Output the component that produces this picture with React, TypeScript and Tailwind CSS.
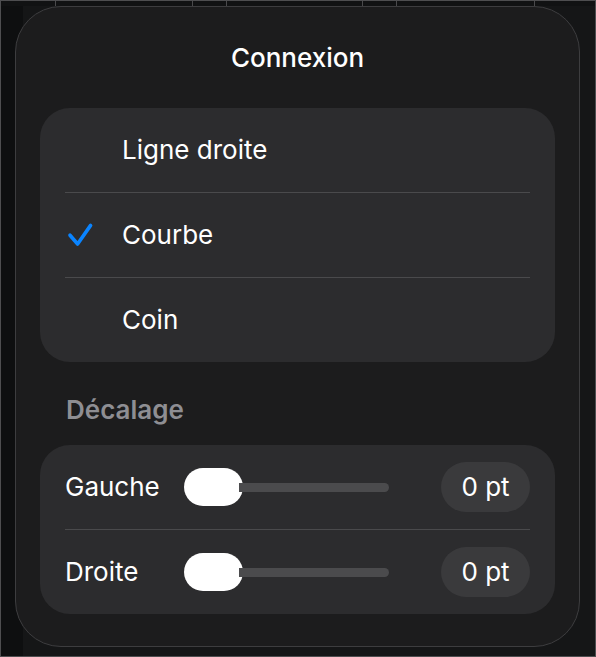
import React from "react";

function Check() {
  return (
    <svg width="30" height="30" viewBox="0 0 30 30" fill="none">
      <path
        d="M5 15.2 L12.6 24 L25.6 5.4"
        stroke="#0a84ff"
        strokeWidth="3.6"
        strokeLinecap="round"
        strokeLinejoin="round"
      />
    </svg>
  );
}

function OptionRow({ label, checked }: { label: string; checked?: boolean }) {
  return (
    <div className="flex h-[84px] items-center px-[25px]">
      <div className="flex w-[57px] items-center">{checked ? <Check /> : null}</div>
      <span className="text-[26px] leading-[30px] text-white">{label}</span>
    </div>
  );
}

function SliderRow({ label }: { label: string }) {
  return (
    <div className="flex h-[84px] items-center px-[25px]">
      <span className="w-[119px] text-[26px] leading-[30px] text-white">{label}</span>
      <div className="flex w-[205px] items-center">
        <div className="h-[38px] w-[59px] shrink-0 rounded-[19px] bg-white" />
        <div className="-ml-[4px] h-[9px] flex-1 rounded-r-full bg-[#4b4b4d]" />
      </div>
      <div className="ml-auto flex h-[50px] w-[89px] items-center justify-center rounded-full bg-[#3a3a3c] text-[26px] leading-[30px] text-white">
        0 pt
      </div>
    </div>
  );
}

function Sep() {
  return <div className="mx-[25px] h-px bg-[#4a4a4c]" />;
}

export default function App() {
  return (
    <div
      className="flex h-[657px] w-[596px] flex-col overflow-hidden border border-[#4e4e50] bg-[#121314]"
      style={{ fontFamily: "Inter, 'Noto Sans', sans-serif" }}
    >
      <div className="flex h-[5px] shrink-0 bg-[#111213]">
        <div className="w-[54px]" />
        <div className="w-[137px] border-l border-[#4a4a4c]" />
        <div className="w-[34px] border-l border-[#4a4a4c]" />
        <div className="w-[136px] border-l border-[#4a4a4c]" />
        <div className="w-[34px] border-l border-[#4a4a4c]" />
        <div className="w-[138px] border-l border-[#4a4a4c]" />
        <div className="flex-1 border-l border-[#4a4a4c]" />
      </div>
      <div className="flex flex-1 bg-[linear-gradient(90deg,#0e0f10_0px,#0e0f10_22px,#151617_22px)]">
        <div className="ml-[14px] flex h-[641px] w-[565px] flex-col rounded-[46px] border border-[#3d3d3f] bg-[#1c1c1d] px-[24px]">
          <div className="flex h-[101px] items-center justify-center">
            <span className="text-[26px] font-medium leading-[30px] text-white">Connexion</span>
          </div>
          <div className="rounded-[30px] bg-[#2c2c2e]">
            <OptionRow label="Ligne droite" />
            <Sep />
            <OptionRow label="Courbe" checked />
            <Sep />
            <OptionRow label="Coin" />
          </div>
          <div className="h-[83px] pl-[26px] pt-[33px]">
            <span className="text-[26px] font-semibold leading-[30px] text-[#8e8e93]">Décalage</span>
          </div>
          <div className="rounded-[30px] bg-[#2c2c2e]">
            <SliderRow label="Gauche" />
            <Sep />
            <SliderRow label="Droite" />
          </div>
        </div>
      </div>
    </div>
  );
}
